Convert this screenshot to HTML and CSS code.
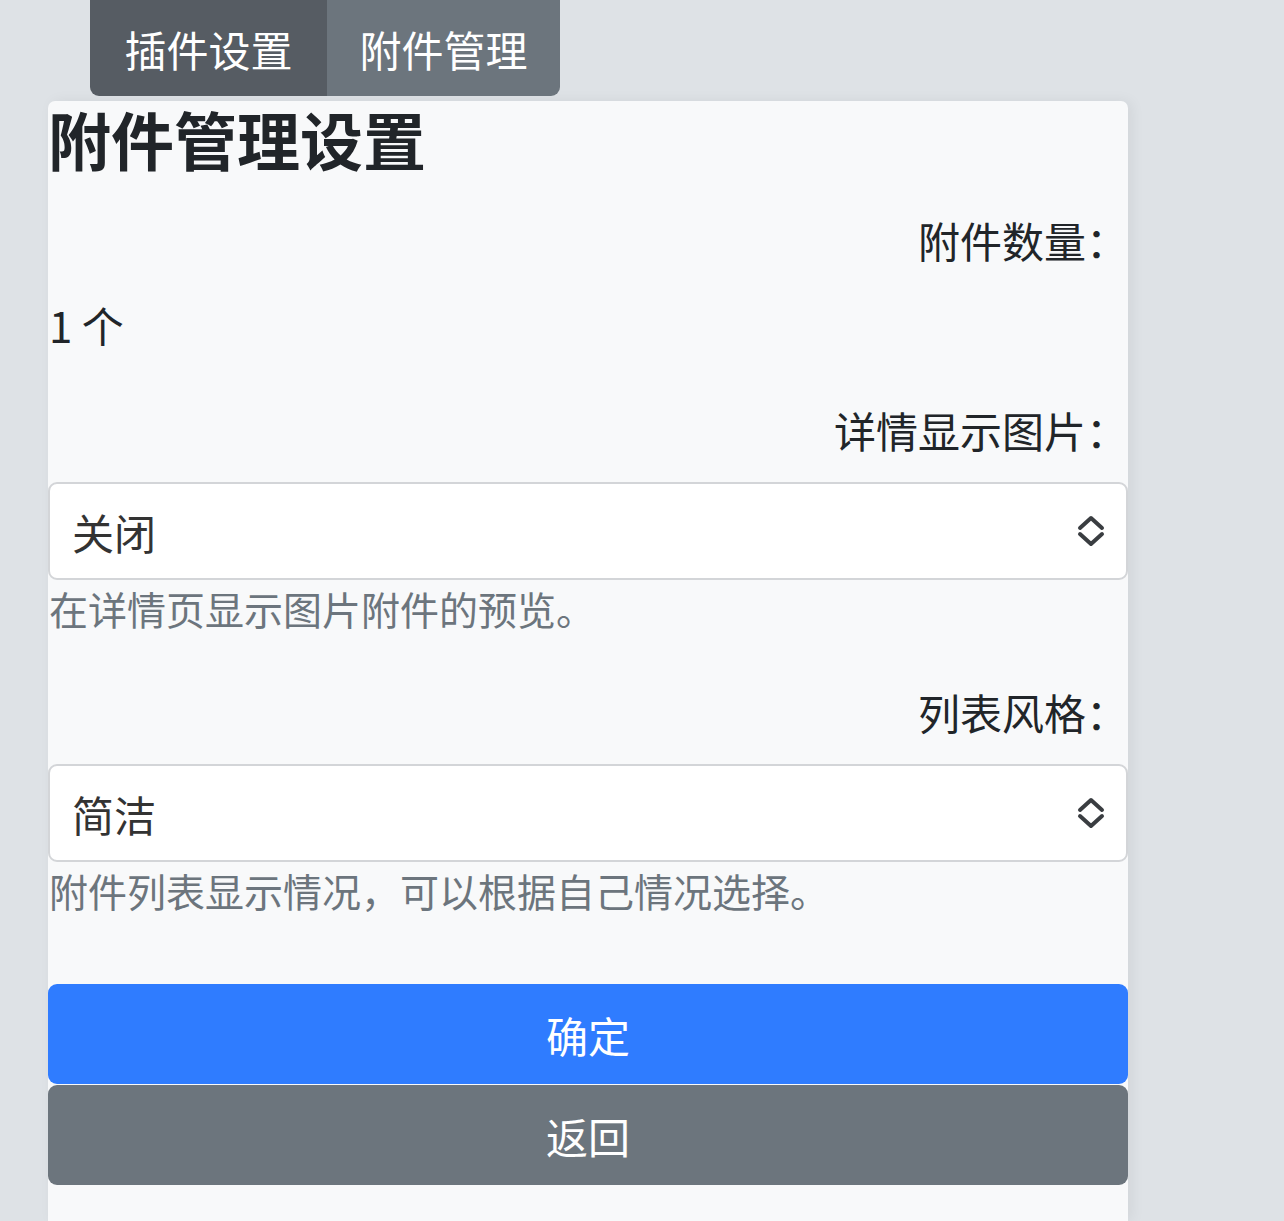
FILE: index.html
```html
<!DOCTYPE html>
<html lang="zh-CN">
<head>
<meta charset="utf-8">
<title>附件管理设置</title>
<link rel="stylesheet" href="styles.css">
</head>
<body>
<div class="page">
  <nav class="tabs">
    <a class="tab tab-active">插件设置</a>
    <a class="tab">附件管理</a>
  </nav>
  <main class="card">
    <h1 class="title">附件管理设置</h1>
    <div class="group group-first">
      <div class="label">附件数量：</div>
      <div class="value">1 个</div>
    </div>
    <div class="group">
      <div class="label">详情显示图片：</div>
      <div class="select">
        <span class="select-text">关闭</span>
        <svg class="chev" width="28" height="32" viewBox="0 0 28 32"><path d="M3 13 L14 3 L25 13 M3 19 L14 29 L25 19" fill="none" stroke="#3a3d41" stroke-width="4" stroke-linecap="round" stroke-linejoin="round"/></svg>
      </div>
      <div class="help">在详情页显示图片附件的预览。</div>
    </div>
    <div class="group">
      <div class="label">列表风格：</div>
      <div class="select">
        <span class="select-text">简洁</span>
        <svg class="chev" width="28" height="32" viewBox="0 0 28 32"><path d="M3 13 L14 3 L25 13 M3 19 L14 29 L25 19" fill="none" stroke="#3a3d41" stroke-width="4" stroke-linecap="round" stroke-linejoin="round"/></svg>
      </div>
      <div class="help">附件列表显示情况，可以根据自己情况选择。</div>
    </div>
    <div class="actions">
      <button class="btn btn-primary">确定</button>
      <button class="btn btn-secondary">返回</button>
    </div>
  </main>
</div>
</body>
</html>
```
FILE: styles.css
```css
* { box-sizing: border-box; }
html, body {
  margin: 0;
  padding: 0;
  background: #dee2e6;
  font-family: "Noto Sans CJK SC", "Noto Sans", "Liberation Sans", sans-serif;
  color: #212529;
}
.page {
  padding-left: 48px;
  width: 1128px;
}
.tabs {
  display: flex;
  margin-left: 42px;
  width: 470px;
  height: 96px;
  border-radius: 0 0 9px 9px;
  overflow: hidden;
}
.tab {
  display: flex;
  align-items: center;
  justify-content: center;
  color: #fff;
  font-size: 42px;
  background: #6c757d;
  width: 233px;
}
.tab-active {
  background: #565c63;
  width: 237px;
}
.card {
  margin-top: 5px;
  width: 1080px;
  min-height: 1120px;
  background: #f8f9fa;
  border-radius: 7px 7px 0 0;
  box-shadow: 4px 0 14px rgba(0, 0, 0, 0.06);
}
.title {
  margin: 0;
  font-size: 63px;
  font-weight: 700;
  line-height: 74px;
  color: #212529;
}
.group { margin-top: 45px; }
.group-first { margin-top: 35px; }
.label {
  font-size: 42px;
  line-height: 60px;
  text-align: right;
  padding-right: 0;
  color: #212529;
}
.value {
  margin-top: 25px;
  font-size: 42px;
  line-height: 60px;
  padding-left: 1px;
}
.select {
  margin-top: 22px;
  height: 98px;
  background: #fff;
  border: 2px solid #d3d5d8;
  border-radius: 9px;
  display: flex;
  align-items: center;
  justify-content: space-between;
  padding: 0 21px 0 22px;
}
.select-text {
  font-size: 42px;
  color: #333;
}
.chev { display: block; }
.help {
  font-size: 39px;
  line-height: 57px;
  color: #6c757d;
  padding-left: 1px;
}
.actions {
  margin-top: 65px;
  display: flex;
  flex-direction: column;
  gap: 1px;
}
.btn {
  display: block;
  width: 100%;
  height: 100px;
  border: 0;
  border-radius: 9px;
  color: #fff;
  font-size: 42px;
  font-family: inherit;
}
.btn-primary { background: #2f7cff; }
.btn-secondary { background: #6c757d; }
```
